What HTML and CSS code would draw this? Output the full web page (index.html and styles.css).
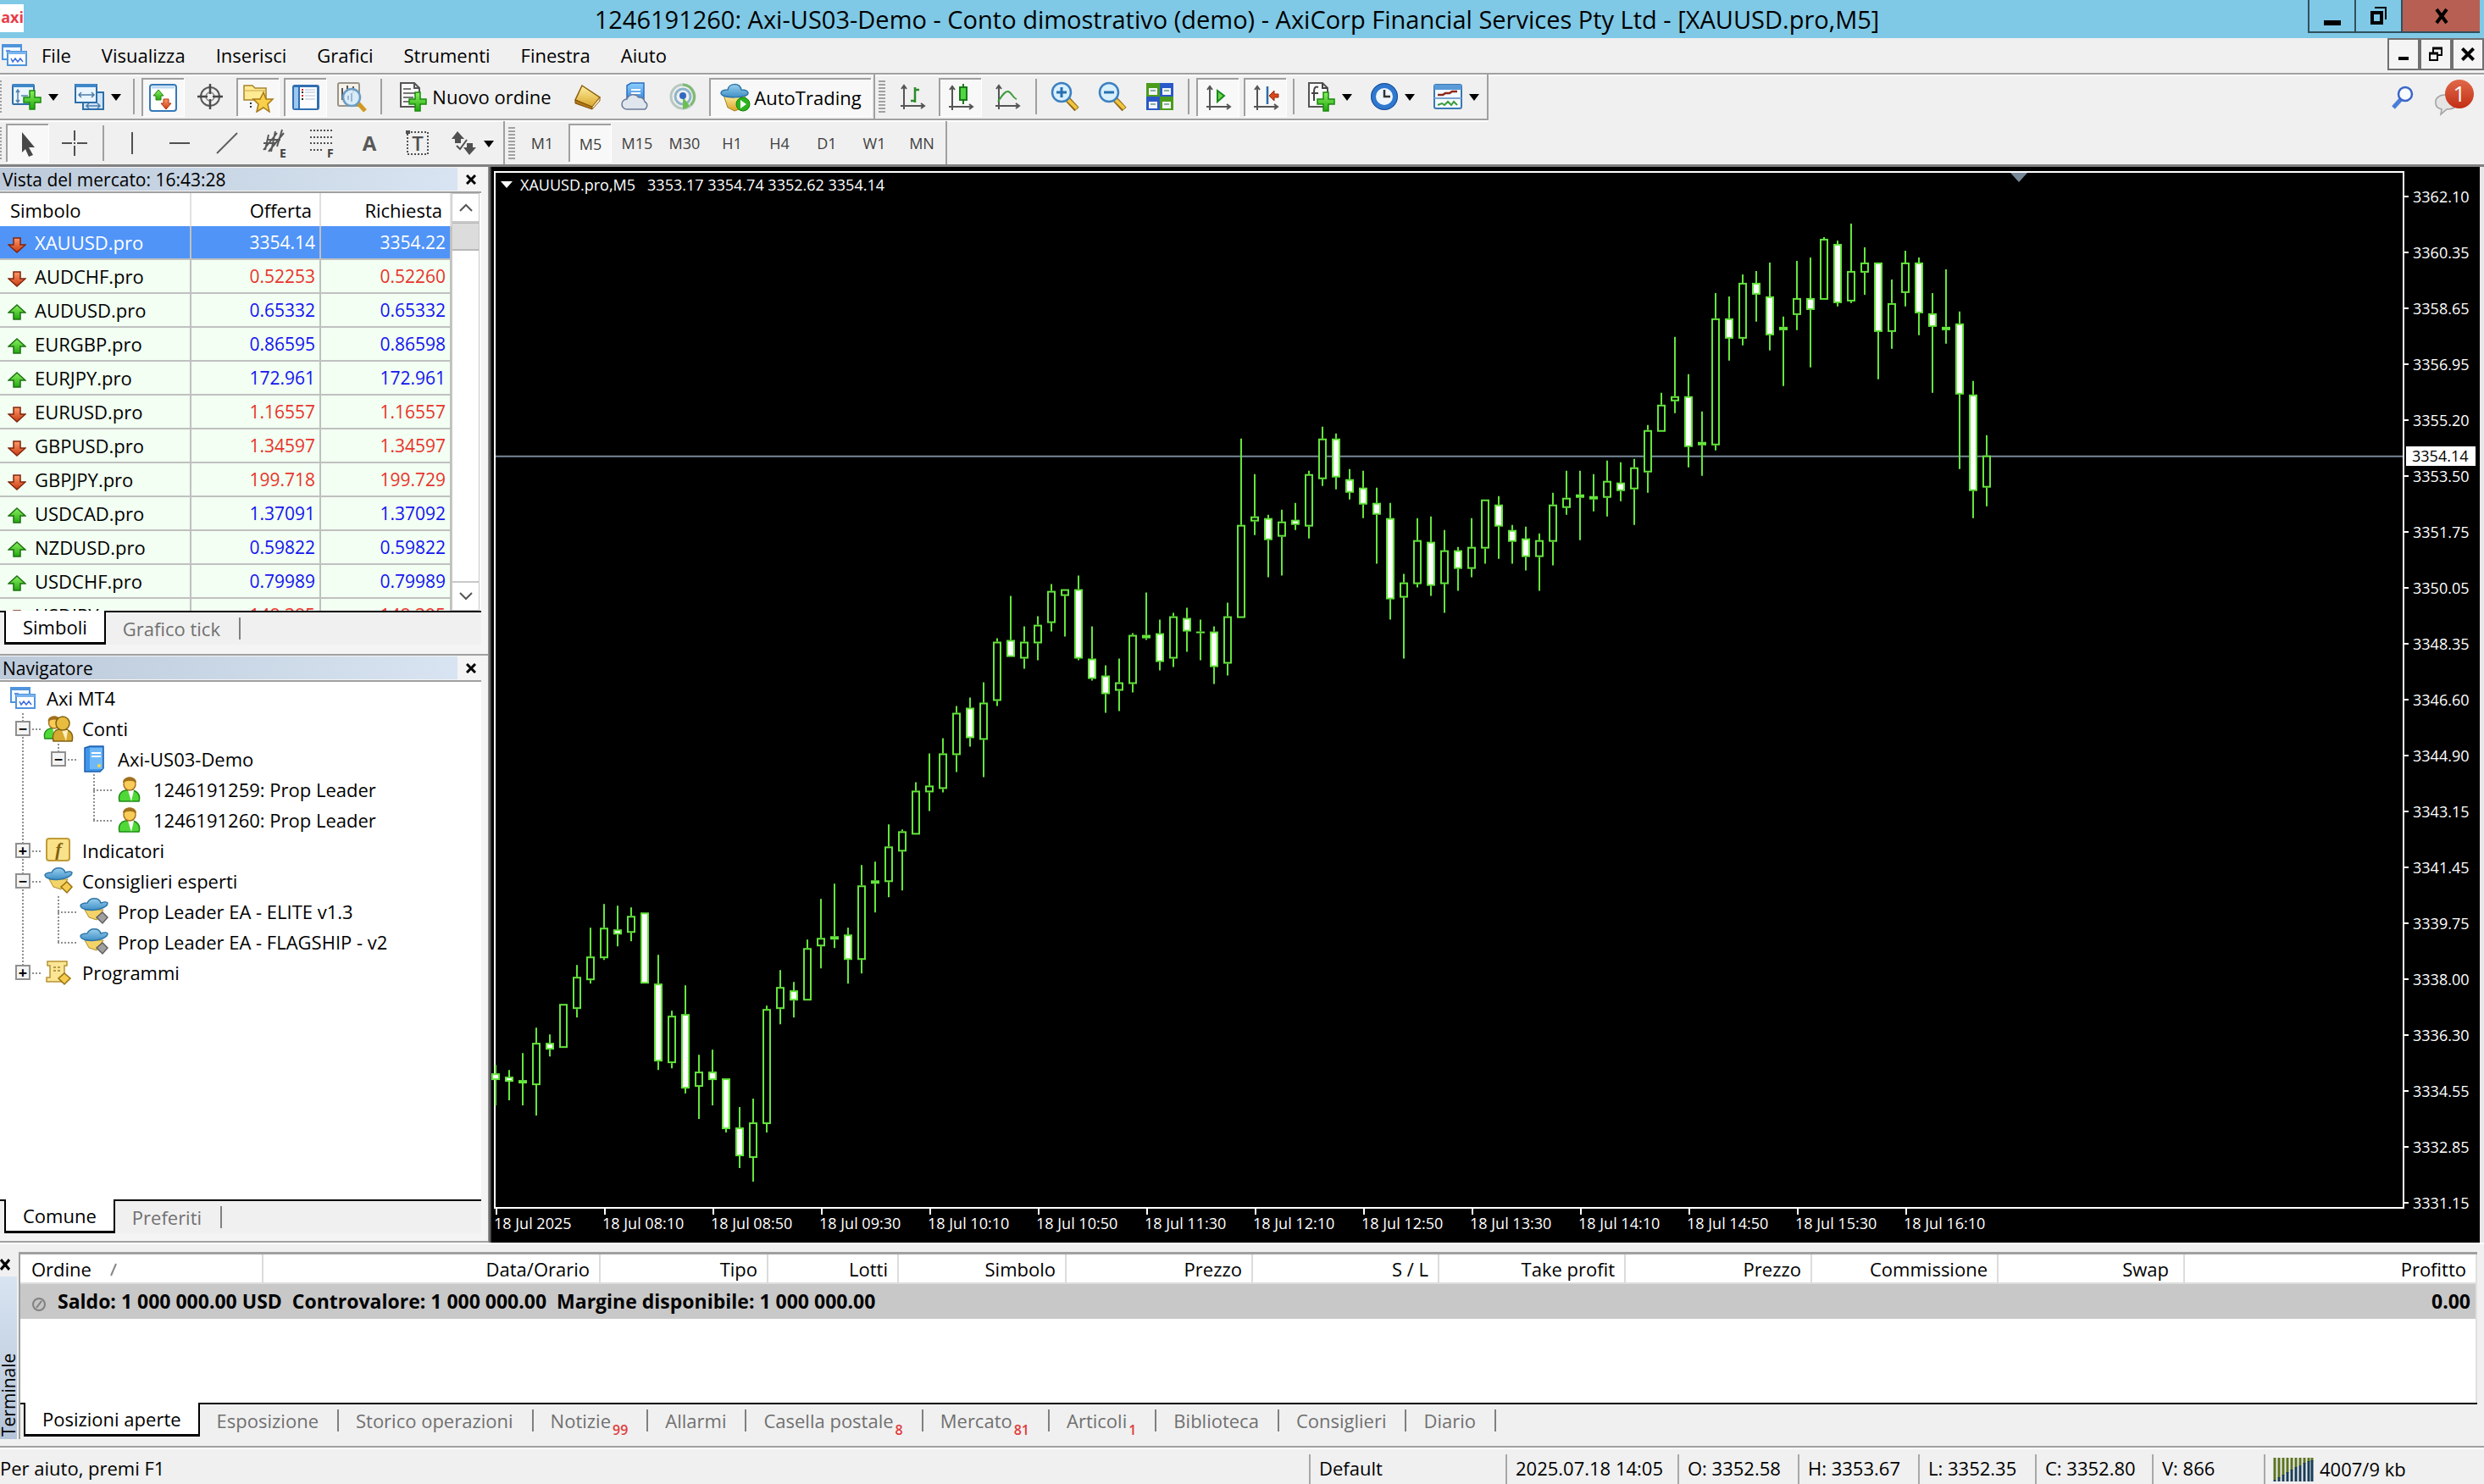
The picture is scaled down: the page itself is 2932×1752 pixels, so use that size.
FILE: index.html
```html
<!DOCTYPE html>
<html lang="it">
<head>
<meta charset="utf-8">
<title>1246191260: Axi-US03-Demo - [XAUUSD.pro,M5]</title>
<link rel="stylesheet" href="styles.css">
</head>
<body>
<svg class="sprite" aria-hidden="true">
  <defs>
    <linearGradient id="gGreen" x1="0" y1="0" x2="0" y2="1"><stop offset="0" stop-color="#8cf060"/><stop offset="1" stop-color="#22a80e"/></linearGradient>
    <linearGradient id="gBlue" x1="0" y1="0" x2="0" y2="1"><stop offset="0" stop-color="#8fd0ff"/><stop offset="1" stop-color="#2d7fd6"/></linearGradient>
    <linearGradient id="gHat" x1="0" y1="0" x2="0" y2="1"><stop offset="0" stop-color="#9ad0ee"/><stop offset="1" stop-color="#3f8fc6"/></linearGradient>
    <linearGradient id="gGold" x1="0" y1="0" x2="0" y2="1"><stop offset="0" stop-color="#fff0a0"/><stop offset="1" stop-color="#d8a428"/></linearGradient>
    <linearGradient id="gRed" x1="0" y1="0" x2="0" y2="1"><stop offset="0" stop-color="#ff9a6a"/><stop offset="1" stop-color="#c83a10"/></linearGradient>
    <linearGradient id="gBadge" x1="0" y1="0" x2="0" y2="1"><stop offset="0" stop-color="#e0694a"/><stop offset="1" stop-color="#c22e16"/></linearGradient>
  </defs>
  <symbol id="plus" viewBox="0 0 22 24"><path d="M8 1h6v8h7v6h-7v8H8v-8H1V9h7z" fill="url(#gGreen)" stroke="#178a0c" stroke-width="1.5"/></symbol>
  <symbol id="newchart" viewBox="0 0 36 34"><rect x="1" y="3" width="25" height="23" rx="1" fill="#eaf5ff" stroke="#2e6ea8" stroke-width="2"/><path d="M1 2h25v4H1z" fill="#3f86c8"/><path d="M7 10v13M5 12l2-3 2 3M5 21l2 3 2-3M11 16h8" stroke="#5583ad" stroke-width="1.5" fill="none"/><use href="#plus" x="13" y="9" width="22" height="24"/></symbol>
  <symbol id="profiles" viewBox="0 0 36 34"><rect x="10" y="12" width="24" height="20" fill="#cfe4f8" stroke="#2e6ea8" stroke-width="2"/><rect x="1" y="3" width="25" height="21" fill="#eaf5ff" stroke="#2e6ea8" stroke-width="2"/><path d="M1 2h25v4H1z" fill="#3f86c8"/><path d="M6 15h16M8 12l-3 3 3 3M20 12l3 3-3 3M14 28h15M17 25l-3 3 3 3M27 25l3 3-3 3" stroke="#4d7eaa" stroke-width="1.5" fill="none"/></symbol>
  <symbol id="market" viewBox="0 0 36 34"><rect x="2" y="2" width="31" height="31" rx="3" fill="#fff" stroke="#3579b8" stroke-width="2"/><path d="M4 5h27" stroke="#bcd9f2" stroke-width="3"/><path d="M6 15l6-7 6 7h-3v5H9v-5z" fill="url(#gGreen)" stroke="#27840f"/><path d="M15 24l6 7 6-7h-3v-5h-6v5z" fill="url(#gRed)" stroke="#b0300c"/></symbol>
  <symbol id="cross" viewBox="0 0 34 34"><circle cx="17" cy="17" r="11" fill="none" stroke="#585858" stroke-width="2"/><circle cx="17" cy="17" r="5" fill="none" stroke="#888" stroke-width="1.5"/><path d="M17 2v12M17 20v12M2 17h12M20 17h12" stroke="#484848" stroke-width="2.5"/></symbol>
  <symbol id="favor" viewBox="0 0 38 36"><path d="M2 4h10l3 3h13v14H2z" fill="#ffeb94" stroke="#a8842a" stroke-width="1.5"/><path d="M2 10h26" stroke="#c9a548"/><path d="M10 24v8" stroke="#333" stroke-width="2" stroke-dasharray="2 2"/><path d="M25 12l3 8h8l-6 6 2 9-7-5-8 5 2-9-6-6h8z" fill="#f8cf48" stroke="#a87a18" stroke-width="1.5"/></symbol>
  <symbol id="navpane" viewBox="0 0 36 34"><rect x="2" y="2" width="32" height="30" rx="3" fill="#2f6fb2"/><rect x="4" y="5" width="5" height="25" fill="#9cc8f0"/><rect x="11" y="5" width="20" height="25" fill="#fdfdff"/><path d="M13 8h2M13 15h2" stroke="#e02020" stroke-width="2"/><path d="M13 11h2M13 19h2" stroke="#222" stroke-width="2"/><path d="M17 8h12M17 11h12M17 15h12M17 19h12" stroke="#b0c0d4"/></symbol>
  <symbol id="tester" viewBox="0 0 38 36"><rect x="2" y="2" width="25" height="27" rx="2" fill="#f6f2ea" stroke="#9a9488" stroke-width="2"/><path d="M7 8v14M13 5v8M20 6v8" stroke="#555" stroke-width="2"/><path d="M25 25l9 10" stroke="#d09a20" stroke-width="5"/><circle cx="18" cy="19" r="10" fill="#d5ebfb" fill-opacity=".9" stroke="#6d9cc4" stroke-width="2.5"/><path d="M18 14v10M14 17v5" stroke="#9cb8d0" stroke-width="2"/></symbol>
  <symbol id="neworder" viewBox="0 0 34 38"><path d="M2 3h16l6 6v22H2z" fill="#fafafa" stroke="#555" stroke-width="2"/><path d="M18 3v6h6" fill="none" stroke="#555" stroke-width="2"/><path d="M5 10h9M5 15h14M5 20h12M5 25h8" stroke="#777" stroke-width="2"/><use href="#plus" x="11" y="13" width="22" height="24"/></symbol>
  <symbol id="book" viewBox="0 0 34 32"><path d="M10 3L31 17 22 29 2 20z" fill="url(#gGold)" stroke="#8c5d0c" stroke-width="1.5"/><path d="M2 20l20 8v3L2 24z" fill="#b07818" stroke="#7a4d08"/><path d="M22 28l9-11v4l-9 10z" fill="#fff3cf" stroke="#8c5d0c"/></symbol>
  <symbol id="cloud" viewBox="0 0 34 34"><path d="M7 4l5-3h15v20l-4 2H7z" fill="url(#gBlue)" stroke="#2a6fc0" stroke-width="1.5"/><path d="M12 9h11M12 13h11" stroke="#fff" stroke-width="2"/><path d="M7 32a6 6 0 0 1 0-12 8 8 0 0 1 14-2 6 6 0 0 1 7 5 5 5 0 0 1 0 9z" fill="#dfe6ee" stroke="#6a7c98" stroke-width="1.5"/></symbol>
  <symbol id="signal" viewBox="0 0 34 34"><circle cx="17" cy="17" r="14" fill="none" stroke="#b8c8c0" stroke-width="3"/><path d="M17 3a14 14 0 0 1 9 24" fill="none" stroke="#7cba70" stroke-width="3"/><circle cx="17" cy="17" r="9" fill="none" stroke="#8fb4c8" stroke-width="3"/><path d="M17 17v15a14 14 0 0 0 8-4z" fill="#6cc050"/><circle cx="17" cy="16" r="4" fill="#3468c0"/></symbol>
  <symbol id="auto" viewBox="0 0 36 34"><path d="M4 14h26l-5 16-8 3-8-4z" fill="url(#gGold)" stroke="#a88020"/><path d="M1 12c0-4 5-4 8-4 1-8 14-9 16 0 4 0 8 1 8 4 0 6-31 7-32 0z" fill="url(#gHat)" stroke="#2e75a8" stroke-width="1.5"/><circle cx="27" cy="25" r="8" fill="#2cb41c" stroke="#128008"/><path d="M24 20l7 5-7 5z" fill="#fff"/></symbol>
  <symbol id="axes" viewBox="0 0 32 34"><path d="M6 4v28M2 28h28M3 8l3-4 3 4M26 25l4 3-4 3" fill="none" stroke="#555" stroke-width="2"/></symbol>
  <symbol id="bars" viewBox="0 0 32 34"><use href="#axes"/><path d="M19 6v18M19 9h5M14 22h5" stroke="#2a8c2a" stroke-width="2.5" fill="none"/></symbol>
  <symbol id="candles" viewBox="0 0 32 34"><use href="#axes"/><path d="M19 1v24" stroke="#1a7a1a" stroke-width="2"/><rect x="15" y="5" width="8" height="15" fill="#50d840" stroke="#1a7a1a" stroke-width="2"/></symbol>
  <symbol id="line" viewBox="0 0 32 34"><use href="#axes"/><path d="M5 23C9 17 13 10 17 11s6 8 10 9" stroke="#3a9c3a" stroke-width="2" fill="none"/></symbol>
  <symbol id="zoomin" viewBox="0 0 36 36"><path d="M21 21l11 12" stroke="#8c6410" stroke-width="7"/><path d="M21 21l11 11" stroke="#f0c440" stroke-width="4"/><circle cx="14" cy="13" r="11" fill="#d8effc" stroke="#3c80c0" stroke-width="2.5"/><path d="M8 13h12M14 7v12" stroke="#2870b0" stroke-width="3"/></symbol>
  <symbol id="zoomout" viewBox="0 0 36 36"><path d="M21 21l11 12" stroke="#8c6410" stroke-width="7"/><path d="M21 21l11 11" stroke="#f0c440" stroke-width="4"/><circle cx="14" cy="13" r="11" fill="#d8effc" stroke="#3c80c0" stroke-width="2.5"/><path d="M8 13h12" stroke="#2870b0" stroke-width="3"/></symbol>
  <symbol id="tile" viewBox="0 0 34 34"><path d="M1 1h16v16H1zM17 17h16v16H17z" fill="#4c9c1c"/><path d="M17 1h16v16H17zM1 17h16v16H1z" fill="#2a58c8"/><path d="M4 7h10v8H4zM20 7h10v8H20zM4 23h10v8H4zM20 23h10v8H20z" fill="#f2f6fa"/><path d="M6 10h6M22 10h6M6 26h6M22 26h6" stroke="#8ab0a0" stroke-width="2"/></symbol>
  <symbol id="scroll" viewBox="0 0 32 34"><use href="#axes"/><path d="M15 9l8 6-8 7z" fill="#6ad850" stroke="#1a8a1a" stroke-width="2"/></symbol>
  <symbol id="shift" viewBox="0 0 32 34"><use href="#axes"/><path d="M18 4v21" stroke="#2a6ca8" stroke-width="2.5"/><path d="M20 15l6-6v4h5v4h-5v4z" fill="#d84818" stroke="#98280c"/></symbol>
  <symbol id="indic" viewBox="0 0 34 38"><path d="M2 3h16l6 6v22H2z" fill="#fafafa" stroke="#555" stroke-width="2"/><path d="M18 3v6h6M13 8c-4-2-5 2-5 5v11M5 15h8" fill="none" stroke="#444" stroke-width="2"/><use href="#plus" x="11" y="13" width="22" height="24"/></symbol>
  <symbol id="clock" viewBox="0 0 34 34"><circle cx="17" cy="17" r="13" fill="#eef6fc" stroke="#2f78d0" stroke-width="6"/><circle cx="17" cy="17" r="15.5" fill="none" stroke="#1a4c90"/><path d="M17 9v8h7" fill="none" stroke="#333" stroke-width="2.5"/></symbol>
  <symbol id="template" viewBox="0 0 36 34"><rect x="2" y="3" width="32" height="28" rx="2" fill="#f4faff" stroke="#3a78b4" stroke-width="2"/><path d="M2 3h32v6H2z" fill="#5a9ad8"/><path d="M2 19h32" stroke="#7aa8d0" stroke-width="2"/><path d="M6 15h6l3-2h5l3-2h6" stroke="#902818" stroke-width="2.5" fill="none"/><path d="M6 27l5-2 3 2 4-4 4 4 3-4 4 4" stroke="#3a9c3a" stroke-width="2" fill="none"/></symbol>
  <symbol id="cursor" viewBox="0 0 34 34"><path d="M10 3l15 18h-7l5 9-5 2-4-9-4 4z" fill="#484848"/></symbol>
  <symbol id="tcross" viewBox="0 0 34 34"><path d="M17 2v12M17 20v12M2 17h12M20 17h12M16 17h2" stroke="#505050" stroke-width="2"/></symbol>
  <symbol id="vline" viewBox="0 0 34 34"><path d="M17 4v26" stroke="#505050" stroke-width="2"/></symbol>
  <symbol id="hline" viewBox="0 0 34 34"><path d="M5 17h24" stroke="#505050" stroke-width="2"/></symbol>
  <symbol id="trend" viewBox="0 0 34 34"><path d="M5 29L29 5" stroke="#606060" stroke-width="2"/></symbol>
  <symbol id="channel" viewBox="0 0 34 36"><path d="M4 26L20 6M10 28L28 6M4 18h14M8 14h16M10 8l-4 18M18 4l-5 24M26 2l-6 20" stroke="#585858" stroke-width="2"/></symbol>
  <symbol id="fibo" viewBox="0 0 34 36"><path d="M3 3h26M3 11h26M3 18h26M3 26h16" stroke="#505050" stroke-width="2" stroke-dasharray="2 2"/></symbol>
  <symbol id="label" viewBox="0 0 34 34"><rect x="6" y="4" width="24" height="26" fill="none" stroke="#505050" stroke-width="2" stroke-dasharray="2 2"/><path d="M4 2h5v4H4z" fill="#505050"/></symbol>
  <symbol id="arrows" viewBox="0 0 34 34"><path d="M10 3l8 9h-4v5H7v-5H3zM24 31l8-9h-4v-5h-7v5h-4z" fill="#505050"/><path d="M9 20l4 4 8-11" fill="none" stroke="#505050" stroke-width="2"/></symbol>
  <symbol id="caret" viewBox="0 0 12 8"><path d="M0 0h12L6 8z" fill="#000"/></symbol>
  <symbol id="chartwin" viewBox="0 0 30 28"><rect x="1" y="2" width="22" height="17" fill="#f3f9ff" stroke="#4f94dc" stroke-width="2"/><path d="M1 2h22v3H1z" fill="#4f94dc"/><path d="M5 9h3M9 8v3" stroke="#3a6ce0" stroke-width="1.5"/><rect x="7" y="10" width="22" height="16" fill="#fff" stroke="#4f94dc" stroke-width="2"/><path d="M7 10h22v3H7z" fill="#7ab4ee"/><path d="M11 18l2 4 3-4 3 4 3-4 3 4" stroke="#3a6ce0" stroke-width="1.5" fill="none"/></symbol>
  <symbol id="up" viewBox="0 0 22 20"><path d="M11 1l10 9h-6v8H7v-8H1z" fill="url(#gGreen)" stroke="#1c7010" stroke-width="1.5"/></symbol>
  <symbol id="down" viewBox="0 0 22 20"><path d="M11 19l10-9h-6V2H7v8H1z" fill="url(#gRed)" stroke="#80240c" stroke-width="1.5"/></symbol>
  <symbol id="user" viewBox="0 0 28 32"><path d="M2 30c-2-8 2-12 7-13h9c6 2 9 6 7 13z" fill="#50d838" stroke="#1e8c14" stroke-width="1.5"/><path d="M12 17l4 13 3-13z" fill="#fff"/><circle cx="14" cy="10" r="7" fill="#f8cc58" stroke="#a87020" stroke-width="1.5"/><path d="M6 8C6-1 22-1 22 8c-6-3-10-3-16 0z" fill="#a0701c"/></symbol>
  <symbol id="users" viewBox="0 0 36 34"><use href="#user" x="0" y="0" width="26" height="32"/><path d="M12 32c-2-9 2-13 6-14h9c6 2 9 6 7 14z" fill="#d8aa30" stroke="#806010" stroke-width="1.5"/><path d="M22 19l5 13 2-13z" fill="#fff0c0"/><circle cx="23" cy="11" r="8" fill="#e8bc40" stroke="#806010" stroke-width="1.5"/></symbol>
  <symbol id="server" viewBox="0 0 26 32"><path d="M2 3l6-2h16v26l-4 4H2z" fill="#3f96e8" stroke="#1c5cac" stroke-width="1.5"/><path d="M8 3h15v25H8z" fill="#6fb8f8"/><path d="M10 9h11M10 13h11" stroke="#fff" stroke-width="2"/><circle cx="19" cy="24" r="2" fill="#f8d840"/></symbol>
  <symbol id="func" viewBox="0 0 32 32"><rect x="2" y="2" width="27" height="26" rx="3" fill="#fae28a" stroke="#c09c38" stroke-width="2"/></symbol>
  <symbol id="hat" viewBox="0 0 34 32"><path d="M6 14l5 9 9 3 8-12z" fill="#f4d468" stroke="#b08c28"/><path d="M1 9c1-3 6-3 8-3 3-7 14-7 16 0 3-1 7-2 8 0 0 9-31 12-32 3z" fill="url(#gHat)" stroke="#2e75a8" stroke-width="1.5"/></symbol>
  <symbol id="experts" viewBox="0 0 34 32"><use href="#hat"/><path d="M27 17l6 6-6 7-7-7z" fill="#f4cc50" stroke="#987010" stroke-width="1.5"/></symbol>
  <symbol id="expert" viewBox="0 0 34 32"><use href="#hat"/><path d="M27 17l6 6-6 7-7-7z" fill="#a0a0a0" stroke="#606060" stroke-width="1.5"/></symbol>
  <symbol id="scripts" viewBox="0 0 32 32"><path d="M3 3h23v5h-3v14h-3v5H2v-5h4V8H3z" fill="#fae694" stroke="#b89430" stroke-width="1.5"/><path d="M10 10h3M15 10h3M10 14h3M15 14h3" stroke="#a08030" stroke-width="1.5"/><path d="M23 17l7 6-7 7-7-7z" fill="#f4cc50" stroke="#987010" stroke-width="1.5"/></symbol>
  <symbol id="xmark" viewBox="0 0 12 12"><path d="M1 1l10 10M11 1L1 11" stroke="#000" stroke-width="3"/></symbol>
</svg>

<header class="titlebar">
  <span class="brand">axi</span>
  <h1 class="title">1246191260: Axi-US03-Demo - Conto dimostrativo (demo) - AxiCorp Financial Services Pty Ltd - [XAUUSD.pro,M5]</h1>
  <div class="winbtns">
    <button class="winbtn" aria-label="Riduci"><svg width="20" height="32" viewBox="0 0 20 32"><path d="M0 21h20v6H0z"/></svg></button>
    <button class="winbtn" aria-label="Ripristina"><svg width="20" height="24" viewBox="0 0 20 24"><path d="M5 2h13v14" fill="none" stroke="#000" stroke-width="2"/><path d="M2 8h11v12H2z" fill="none" stroke="#000" stroke-width="4"/></svg></button>
    <button class="winbtn winbtn-close" aria-label="Chiudi"><svg width="18" height="16" viewBox="0 0 18 16"><path d="M3 0l12 16M15 0L3 16" stroke="#000" stroke-width="4"/></svg></button>
  </div>
</header>

<nav class="menubar">
  <svg class="ic" width="30" height="28"><use href="#chartwin"/></svg>
  <button class="menu">File</button><button class="menu">Visualizza</button><button class="menu">Inserisci</button><button class="menu">Grafici</button><button class="menu">Strumenti</button><button class="menu">Finestra</button><button class="menu">Aiuto</button>
  <div class="mdibtns">
    <button class="mdibtn" aria-label="Riduci grafico"><svg width="14" height="16" viewBox="0 0 14 16"><path d="M1 11h12v4H1z"/></svg></button>
    <button class="mdibtn" aria-label="Ripristina grafico"><svg width="18" height="18" viewBox="0 0 18 18"><path d="M6 7V2h10v8h-4M2 8h9v8H2z" fill="none" stroke="#000" stroke-width="2"/><path d="M5 2h12M1 8h11" stroke="#000" stroke-width="3"/></svg></button>
    <button class="mdibtn" aria-label="Chiudi grafico"><svg width="16" height="16"><use href="#xmark"/></svg></button>
  </div>
</nav>

<div class="toolrow">
  <div class="toolbar">
    <i class="grip grip-edge"></i>
    <button class="tool tool-dd" aria-label="Nuovo grafico"><svg width="36" height="34"><use href="#newchart"/></svg><svg class="caret"><use href="#caret"/></svg></button>
    <button class="tool tool-dd" aria-label="Profili"><svg width="36" height="34"><use href="#profiles"/></svg><svg class="caret"><use href="#caret"/></svg></button>
    <i class="sep"></i>
    <button class="tool on" aria-label="Vista del mercato"><svg width="36" height="34"><use href="#market"/></svg></button>
    <button class="tool" aria-label="Finestra dati"><svg width="34" height="34"><use href="#cross"/></svg></button>
    <button class="tool on" aria-label="Navigatore"><svg width="38" height="36"><use href="#favor"/></svg></button>
    <button class="tool on" aria-label="Terminale"><svg width="36" height="34"><use href="#navpane"/></svg></button>
    <button class="tool" aria-label="Tester"><svg width="38" height="36"><use href="#tester"/></svg></button>
    <i class="sep"></i>
    <button class="tool tool-order"><svg width="34" height="38"><use href="#neworder"/></svg>Nuovo ordine</button>
    <button class="tool" aria-label="MetaEditor"><svg width="34" height="32"><use href="#book"/></svg></button>
    <button class="tool" aria-label="Hosting virtuale"><svg width="34" height="34"><use href="#cloud"/></svg></button>
    <button class="tool" aria-label="Segnali"><svg width="34" height="34"><use href="#signal"/></svg></button>
    <button class="tool tool-auto on"><svg width="36" height="34"><use href="#auto"/></svg>AutoTrading</button>
  </div>
  <div class="toolbar">
    <i class="grip"></i>
    <button class="tool" aria-label="Barre"><svg width="32" height="34"><use href="#bars"/></svg></button>
    <button class="tool on" aria-label="Candele"><svg width="32" height="34"><use href="#candles"/></svg></button>
    <button class="tool" aria-label="Linea"><svg width="32" height="34"><use href="#line"/></svg></button>
    <i class="sep"></i>
    <button class="tool" aria-label="Ingrandisci"><svg width="36" height="36"><use href="#zoomin"/></svg></button>
    <button class="tool" aria-label="Rimpicciolisci"><svg width="36" height="36"><use href="#zoomout"/></svg></button>
    <button class="tool" aria-label="Affianca finestre"><svg width="34" height="34"><use href="#tile"/></svg></button>
    <i class="sep"></i>
    <button class="tool on" aria-label="Scorrimento automatico"><svg width="32" height="34"><use href="#scroll"/></svg></button>
    <button class="tool on" aria-label="Sposta grafico"><svg width="32" height="34"><use href="#shift"/></svg></button>
    <i class="sep"></i>
    <button class="tool tool-dd" aria-label="Indicatori"><svg width="34" height="38"><use href="#indic"/></svg><svg class="caret"><use href="#caret"/></svg></button>
    <button class="tool tool-dd" aria-label="Periodi"><svg width="34" height="34"><use href="#clock"/></svg><svg class="caret"><use href="#caret"/></svg></button>
    <button class="tool tool-dd" aria-label="Modelli"><svg width="36" height="34"><use href="#template"/></svg><svg class="caret"><use href="#caret"/></svg></button>
  </div>
  <div class="tray">
    <button class="traybtn" aria-label="Cerca"><svg width="28" height="28" viewBox="0 0 28 28"><path d="M13 15L3 26" stroke="#4a7cd8" stroke-width="5"/><circle cx="17" cy="10" r="8" fill="#f8fbff" stroke="#3a66c8" stroke-width="2.5"/></svg></button>
    <button class="traybtn" aria-label="Messaggi: 1"><svg width="46" height="42" viewBox="0 0 46 42"><path d="M12 18c-8 0-12 5-11 10 0 4 3 6 7 7l-1 6 7-6c8 0 12-3 12-8s-5-9-14-9z" fill="#e4e4e4" stroke="#a0a0a0" stroke-width="1.5"/><circle cx="29" cy="17" r="17" fill="url(#gBadge)"/><text x="29" y="26" text-anchor="middle" class="badge-n">1</text></svg></button>
  </div>
</div>

<div class="toolrow toolrow-last">
  <div class="toolbar toolbar-open">
    <i class="grip grip-edge"></i>
    <button class="tool on" aria-label="Cursore"><svg width="34" height="34"><use href="#cursor"/></svg></button>
    <button class="tool" aria-label="Mirino"><svg width="34" height="34"><use href="#tcross"/></svg></button>
    <i class="sep"></i>
    <button class="tool" aria-label="Linea verticale"><svg width="34" height="34"><use href="#vline"/></svg></button>
    <button class="tool" aria-label="Linea orizzontale"><svg width="34" height="34"><use href="#hline"/></svg></button>
    <button class="tool" aria-label="Linea di tendenza"><svg width="34" height="34"><use href="#trend"/></svg></button>
    <button class="tool" aria-label="Canale equidistante"><svg width="34" height="36"><use href="#channel"/><text x="23" y="35" class="glyph-s">E</text></svg></button>
    <button class="tool" aria-label="Fibonacci"><svg width="34" height="36"><use href="#fibo"/><text x="23" y="35" class="glyph-s">F</text></svg></button>
    <button class="tool tool-a" aria-label="Testo">A</button>
    <button class="tool" aria-label="Etichetta"><svg width="34" height="34"><use href="#label"/><text x="18" y="26" text-anchor="middle" class="glyph">T</text></svg></button>
    <button class="tool tool-dd" aria-label="Frecce"><svg width="34" height="34"><use href="#arrows"/></svg><svg class="caret"><use href="#caret"/></svg></button>
  </div>
  <div class="toolbar toolbar-open">
    <i class="grip"></i>
    <button class="tool tf">M1</button><button class="tool tf on">M5</button><button class="tool tf">M15</button><button class="tool tf">M30</button><button class="tool tf">H1</button><button class="tool tf">H4</button><button class="tool tf">D1</button><button class="tool tf">W1</button><button class="tool tf">MN</button>
  </div>
</div>

<main class="work">
  <aside class="side">
    <section class="panel">
      <header class="phead"><h2 class="ptitle">Vista del mercato: 16:43:28</h2><button class="pclose" aria-label="Chiudi"><svg width="12" height="12"><use href="#xmark"/></svg></button></header>
      <div class="quotes">
        <table class="qtable">
          <colgroup><col class="q-sym"><col class="q-num"><col></colgroup>
          <thead><tr><th>Simbolo</th><th>Offerta</th><th>Richiesta</th></tr></thead>
          <tbody>
            <tr class="sel"><td><svg class="arr"><use href="#down"/></svg>XAUUSD.pro</td><td>3354.14</td><td>3354.22</td></tr>
            <tr class="dn"><td><svg class="arr"><use href="#down"/></svg>AUDCHF.pro</td><td>0.52253</td><td>0.52260</td></tr>
            <tr><td><svg class="arr"><use href="#up"/></svg>AUDUSD.pro</td><td>0.65332</td><td>0.65332</td></tr>
            <tr><td><svg class="arr"><use href="#up"/></svg>EURGBP.pro</td><td>0.86595</td><td>0.86598</td></tr>
            <tr><td><svg class="arr"><use href="#up"/></svg>EURJPY.pro</td><td>172.961</td><td>172.961</td></tr>
            <tr class="dn"><td><svg class="arr"><use href="#down"/></svg>EURUSD.pro</td><td>1.16557</td><td>1.16557</td></tr>
            <tr class="dn"><td><svg class="arr"><use href="#down"/></svg>GBPUSD.pro</td><td>1.34597</td><td>1.34597</td></tr>
            <tr class="dn"><td><svg class="arr"><use href="#down"/></svg>GBPJPY.pro</td><td>199.718</td><td>199.729</td></tr>
            <tr><td><svg class="arr"><use href="#up"/></svg>USDCAD.pro</td><td>1.37091</td><td>1.37092</td></tr>
            <tr><td><svg class="arr"><use href="#up"/></svg>NZDUSD.pro</td><td>0.59822</td><td>0.59822</td></tr>
            <tr><td><svg class="arr"><use href="#up"/></svg>USDCHF.pro</td><td>0.79989</td><td>0.79989</td></tr>
            <tr class="dn"><td><svg class="arr"><use href="#down"/></svg>USDJPY.pro</td><td>148.385</td><td>148.395</td></tr>
          </tbody>
        </table>
        <div class="sbar">
          <button class="sbtn" aria-label="Su"><svg width="16" height="10" viewBox="0 0 16 10"><path d="M1 9l7-7 7 7" fill="none" stroke="#555" stroke-width="2"/></svg></button>
          <i class="thumb"></i>
          <button class="sbtn sbtn-end" aria-label="Giù"><svg width="16" height="10" viewBox="0 0 16 10"><path d="M1 1l7 7 7-7" fill="none" stroke="#555" stroke-width="2"/></svg></button>
        </div>
      </div>
      <div class="tabs"><button class="tab cur">Simboli</button><button class="tab">Grafico tick</button></div>
    </section>
    <section class="panel panel-grow">
      <header class="phead"><h2 class="ptitle">Navigatore</h2><button class="pclose" aria-label="Chiudi"><svg width="12" height="12"><use href="#xmark"/></svg></button></header>
      <ul class="tree">
        <li><i class="cell"><svg width="30" height="28"><use href="#chartwin"/></svg></i>Axi MT4</li>
        <li><i class="cell v h"><button class="tog" aria-label="Comprimi">−</button></i><i class="cell"><svg width="36" height="34"><use href="#users"/></svg></i>Conti</li>
        <li><i class="cell v"></i><i class="cell end h"><button class="tog" aria-label="Comprimi">−</button></i><i class="cell"><svg width="26" height="32"><use href="#server"/></svg></i>Axi-US03-Demo</li>
        <li><i class="cell v"></i><i class="cell"></i><i class="cell v h"></i><i class="cell"><svg width="28" height="32"><use href="#user"/></svg></i>1246191259: Prop Leader</li>
        <li><i class="cell v"></i><i class="cell"></i><i class="cell end h"></i><i class="cell"><svg width="28" height="32"><use href="#user"/></svg></i>1246191260: Prop Leader</li>
        <li><i class="cell v h"><button class="tog" aria-label="Espandi">+</button></i><i class="cell"><svg width="32" height="32"><use href="#func"/><text x="16" y="22" text-anchor="middle" class="glyph-f">f</text></svg></i>Indicatori</li>
        <li><i class="cell v h"><button class="tog" aria-label="Comprimi">−</button></i><i class="cell"><svg width="34" height="32"><use href="#experts"/></svg></i>Consiglieri esperti</li>
        <li><i class="cell v"></i><i class="cell v h"></i><i class="cell"><svg width="34" height="32"><use href="#expert"/></svg></i>Prop Leader EA - ELITE v1.3</li>
        <li><i class="cell v"></i><i class="cell end h"></i><i class="cell"><svg width="34" height="32"><use href="#expert"/></svg></i>Prop Leader EA - FLAGSHIP - v2</li>
        <li><i class="cell end h"><button class="tog" aria-label="Espandi">+</button></i><i class="cell"><svg width="32" height="32"><use href="#scripts"/></svg></i>Programmi</li>
      </ul>
      <div class="tabs"><button class="tab cur">Comune</button><button class="tab">Preferiti</button></div>
    </section>
  </aside>

  <section class="chart">
    <div class="plot">
      <svg class="candles" id="candleChart" viewBox="585 203 2251 1222" preserveAspectRatio="none"></svg>
      <p class="ohlc"><svg width="14" height="8"><path d="M0 0h14L7 8z" fill="#fff"/></svg>XAUUSD.pro,M5&nbsp;&nbsp; 3353.17 3354.74 3352.62 3354.14</p>
    </div>
    <ol class="prices">
      <li>3362.10</li><li>3360.35</li><li>3358.65</li><li>3356.95</li><li>3355.20</li><li>3353.50</li><li>3351.75</li><li>3350.05</li><li>3348.35</li><li>3346.60</li><li>3344.90</li><li>3343.15</li><li>3341.45</li><li>3339.75</li><li>3338.00</li><li>3336.30</li><li>3334.55</li><li>3332.85</li><li>3331.15</li>
    </ol>
    <span class="bid">3354.14</span>
    <ol class="times">
      <li>18 Jul 2025</li><li>18 Jul 08:10</li><li>18 Jul 08:50</li><li>18 Jul 09:30</li><li>18 Jul 10:10</li><li>18 Jul 10:50</li><li>18 Jul 11:30</li><li>18 Jul 12:10</li><li>18 Jul 12:50</li><li>18 Jul 13:30</li><li>18 Jul 14:10</li><li>18 Jul 14:50</li><li>18 Jul 15:30</li><li>18 Jul 16:10</li>
    </ol>
  </section>
</main>

<section class="terminal">
  <div class="tside"><button class="tclose" aria-label="Chiudi terminale"><svg width="12" height="14" viewBox="0 0 12 12" preserveAspectRatio="none"><use href="#xmark"/></svg></button><h2 class="tname">Terminale</h2></div>
  <div class="tbody">
    <div class="orders">
      <table class="otable">
        <colgroup><col class="o1"><col class="o2"><col class="o3"><col class="o4"><col class="o5"><col class="o6"><col class="o6"><col class="o6"><col class="o6"><col class="o6"><col class="o6"><col></colgroup>
        <thead><tr><th>Ordine <svg class="sort" width="8" height="16" viewBox="0 0 8 16"><path d="M7 1L1 15" stroke="#888" stroke-width="2"/></svg></th><th>Data/Orario</th><th>Tipo</th><th>Lotti</th><th>Simbolo</th><th>Prezzo</th><th>S / L</th><th>Take profit</th><th>Prezzo</th><th>Commissione</th><th class="swap">Swap</th><th>Profitto</th></tr></thead>
        <tbody><tr><td colspan="11"><svg class="dot" width="18" height="18" viewBox="0 0 18 18"><circle cx="9" cy="9" r="7" fill="#c4c4c4" stroke="#808080" stroke-width="2"/><path d="M12 5l-6 8" stroke="#808080" stroke-width="2"/></svg>Saldo: 1 000 000.00 USD&nbsp; Controvalore: 1 000 000.00&nbsp; Margine disponibile: 1 000 000.00</td><td>0.00</td></tr></tbody>
      </table>
    </div>
    <div class="tabs ttabs"><button class="tab cur">Posizioni aperte</button><button class="tab">Esposizione</button><button class="tab">Storico operazioni</button><button class="tab">Notizie<sub>99</sub></button><button class="tab">Allarmi</button><button class="tab">Casella postale<sub>8</sub></button><button class="tab">Mercato<sub>81</sub></button><button class="tab">Articoli<sub>1</sub></button><button class="tab">Biblioteca</button><button class="tab">Consiglieri</button><button class="tab">Diario</button></div>
  </div>
</section>

<footer class="status">
  <span class="st st-help">Per aiuto, premi F1</span>
  <span class="st st-prof">Default</span>
  <span class="st st-time">2025.07.18 14:05</span>
  <span class="st st-o">O: 3352.58</span>
  <span class="st st-o">H: 3353.67</span>
  <span class="st st-l">L: 3352.35</span>
  <span class="st st-l">C: 3352.80</span>
  <span class="st st-v">V: 866</span>
  <span class="st st-net"><svg width="46" height="28" viewBox="0 0 46 28"><path d="M1 0v26M6 0v24M11 0v21M16 0v18M21 0v15M26 0v12M31 0v9M36 0v7M41 0v5M45 0v4" stroke="#5c7420" stroke-width="3"/><path d="M1 26v2M6 23v5M11 20v8M16 17v11M21 14v14M26 11v17M31 9v19M36 6v22M41 4v24M45 3v25" stroke="#183c58" stroke-width="3"/></svg>4007/9 kb</span>
</footer>
<script src="chart.js"></script>
</body>
</html>
```
FILE: styles.css
```css
* { box-sizing: border-box; }
body {
  margin: 0;
  min-height: 100vh;
  display: flex;
  flex-direction: column;
  background: #f0f0f0;
  color: #000;
  font: 22px/30px "Open Sans", "Noto Sans", sans-serif;
}
button { font: inherit; color: inherit; background: none; border: 0; margin: 0; padding: 0; }
h1, h2, p, ul, ol { margin: 0; padding: 0; font-weight: 400; list-style: none; }
svg { flex: none; overflow: visible; }
i { font-style: normal; }
.sprite { position: absolute; width: 0; height: 0; }
.glyph { font: 600 24px "Open Sans", sans-serif; fill: #505050; }
.glyph-s { font: 700 14px "Open Sans", sans-serif; fill: #404040; }
.glyph-f { font: italic 700 22px "Liberation Serif", serif; fill: #806010; }
.badge-n { font: 26px "Open Sans", sans-serif; fill: #fff; }

/* window frame */
.titlebar { display: flex; height: 45px; background: #7fc9e6; }
.brand { width: 28px; height: 33px; margin-top: 5px; background: #fff; color: #e83c48; font: 700 18px/30px "Open Sans", sans-serif; display: flex; justify-content: flex-end; overflow: hidden; }
.title { flex: 1; padding-left: 168px; text-align: center; font-size: 29px; line-height: 45px; white-space: nowrap; }
.winbtns { display: flex; height: 39px; margin-right: 5px; border: solid #30505c; border-width: 0 0 2px 2px; }
.winbtn { width: 55px; display: flex; align-items: center; justify-content: center; border-right: 2px solid #30505c; }
.winbtn-close { width: 91px; background: #b85f54; border-right: 0; }

.menubar { display: flex; align-items: center; height: 43px; padding: 0 0 2px 2px; border-bottom: 2px solid #a0a0a0; box-shadow: 0 2px #fff; }
.menu { padding: 0 18px; }
.menubar .ic { margin-right: -1px; }
.mdibtns { display: flex; align-self: flex-start; margin-left: auto; }
.mdibtn { width: 38px; height: 38px; display: flex; align-items: center; justify-content: center; border: 2px solid #707070; background: #f4f4f4; }

/* toolbars */
.toolrow { display: flex; height: 55px; }
.toolrow-last { height: 51px; }
.toolbar { display: flex; align-items: center; height: 54px; border: solid #a0a0a0; border-width: 0 2px 2px 0; box-shadow: 0 2px #fff; }
.toolbar-open { height: 51px; border-bottom: 0; box-shadow: none; }
.grip { width: 8px; height: 38px; margin: 0 4px; background: repeating-linear-gradient(#a0a0a0 0 2px, transparent 2px 4px); }
.grip-edge { width: 2px; margin: 0 2px 0 0; }
.tool { width: 50px; height: 45px; margin: 0 3px; display: flex; align-items: center; justify-content: center; white-space: nowrap; }
.tool.on { background: #f8f8f8; border: solid #a0a0a0; border-width: 2px 0 0 2px; box-shadow: 1px 1px #fff; }
.tool-dd { width: 68px; justify-content: flex-start; padding-left: 7px; gap: 7px; }
.caret { width: 12px; height: 8px; margin-top: 2px; }
.sep { width: 2px; height: 42px; margin: 0 5px; background: #a0a0a0; }
.tool-order { width: 204px; gap: 5px; }
.tool-auto { width: 191px; gap: 4px; }
.tool-a { font: 700 24px/45px "Open Sans", sans-serif; color: #585858; }
.tf { font-size: 18px; color: #404040; }
.tray { display: flex; align-items: center; gap: 24px; margin-left: auto; padding: 0 12px 2px 0; }
.traybtn { display: flex; }

/* panels on the left */
.work { flex: 1; display: flex; min-height: 0; border-top: 3px solid #808080; }
.side { width: 580px; display: flex; flex-direction: column; padding-right: 4px; background: linear-gradient(90deg, transparent 576px, #a0a0a0 576px, #303030 580px); }
.panel { display: flex; flex-direction: column; padding: 1px 8px 11px 0; border-bottom: 2px solid #a0a0a0; background: #f4f4f4; }
.panel-grow { flex: 1; padding-bottom: 9px; }
.phead { display: flex; align-items: center; justify-content: space-between; height: 30px; padding-right: 4px; border-bottom: 2px solid #a0a0a0; background: linear-gradient(90deg, #bccada, #d8e4f1) 0 0 / 540px 27px no-repeat; }
.ptitle { font-size: 21px; line-height: 28px; padding-left: 3px; }
.pclose { width: 14px; display: flex; }
.quotes { display: flex; height: 493px; overflow: hidden; background: #fff; }
.qtable { flex: none; width: 533px; table-layout: fixed; border-collapse: separate; border-spacing: 0; align-self: flex-start; }
.q-sym { width: 226px; }
.q-num { width: 153px; }
.qtable th { height: 39px; padding: 0 9px 0 12px; font-weight: 400; text-align: right; border-right: 2px solid #e0e0e0; }
.qtable th:first-child { text-align: left; }
.qtable td { height: 40px; padding: 0 5px; font-size: 21px; line-height: 30px; text-align: right; color: #1414f0; background: #f2fff2; border: solid #c0c0c0; border-width: 0 2px 2px 0; }
.qtable td:first-child { padding-left: 9px; text-align: left; font-size: 22px; color: #000; }
.qtable .dn td { color: #e8342c; }
.qtable .dn td:first-child { color: #000; }
.qtable .sel td, .qtable .sel td:first-child { color: #fff; background: #5094f8; }
.arr { width: 22px; height: 20px; margin-right: 10px; vertical-align: -4px; }
.sbar { flex: none; width: 33px; display: flex; flex-direction: column; border: 1px solid #c8c8c8; }
.sbtn { height: 34px; display: flex; align-items: center; justify-content: center; border-bottom: 2px solid #c8c8c8; }
.sbtn-end { margin-top: auto; border: solid #c8c8c8; border-width: 2px 0 0; }
.thumb { height: 33px; background: #dcdcdc; border: 1px solid #b8b8b8; border-width: 1px 0 2px; }

.tabs { display: flex; align-items: flex-start; border-top: 2px solid #000; color: #707070; padding-left: 5px; background: #f0f0f0; }
.tab { position: relative; height: 38px; padding: 0 24px 0 20px; white-space: nowrap; line-height: 32px; }
.tab:not(.cur)::after { content: ""; position: absolute; right: 0; top: 6px; width: 2px; height: 26px; background: #808080; }
.tab.cur { margin-top: -2px; height: 40px; padding: 0 20px; line-height: 36px; background: #fff; color: #000; border: solid #000; border-width: 0 2px 3px; }

.tree { flex: 1; padding: 1px 0 0 6px; background: #fff; }
.tree li { display: flex; align-items: center; height: 36px; white-space: nowrap; }
.cell { position: relative; width: 42px; height: 36px; display: flex; align-items: center; justify-content: center; flex: none; background-repeat: no-repeat; }
.cell:last-of-type { margin-right: 7px; }
.v { background-image: repeating-linear-gradient(#909090 0 2px, transparent 2px 4px); background-size: 2px 36px; background-position: 20px 0; }
.end { background-image: repeating-linear-gradient(#909090 0 2px, transparent 2px 4px); background-size: 2px 18px; background-position: 20px 0; }
.h::before { content: ""; position: absolute; left: 20px; right: 0; top: 18px; height: 2px; background: repeating-linear-gradient(90deg, #909090 0 2px, transparent 2px 4px); }
.tog { position: relative; width: 18px; height: 18px; border: 2px solid #909090; background: #f4f4f4; font: 700 18px/13px "Open Sans", sans-serif; display: flex; align-items: center; justify-content: center; }

/* price chart */
.chart { position: relative; flex: 1; display: grid; grid-template: 1fr 40px / 1fr 89px; padding: 5px 0 0 3px; background: #000; border-right: 5px solid #e8e8e8; color: #fff; font-size: 18px; line-height: 24px; }
.plot { position: relative; border: 2px solid #fff; }
.candles { position: absolute; inset: 0; width: 100%; height: 100%; }
.ohlc { position: absolute; left: 6px; top: 2px; display: flex; align-items: center; gap: 9px; }
.prices { display: flex; flex-direction: column; margin-top: -3px; margin-bottom: -26px; }
.prices li { flex: 1; display: flex; align-items: center; gap: 5px; }
.prices li::before { content: ""; width: 5px; height: 2px; background: #fff; }
.bid { position: absolute; right: 5px; top: 26%; width: 82px; padding-left: 7px; line-height: 23px; background: #fff; color: #000; }
.times { display: flex; grid-column: 1 / 3; }
.times li { width: 128px; line-height: 34px; background: linear-gradient(#fff, #fff) 2px 0 / 2px 7px no-repeat; white-space: nowrap; }

/* terminal */
.terminal { display: flex; padding: 9px 8px 8px 0; border-top: 2px solid #fff; }
.tside { width: 24px; padding-top: 3px; display: flex; flex-direction: column; border-right: 2px solid #a0a0a0; }
.tclose { height: 24px; display: flex; align-items: center; margin-bottom: 2px; }
.tname { flex: 1; width: 20px; display: flex; align-items: center; writing-mode: vertical-rl; transform: rotate(180deg); font-size: 21px; line-height: 20px; padding-top: 3px; background: linear-gradient(#b4c4d8, #d8e4f1); }
.tbody { flex: 1; display: flex; flex-direction: column; border-top: 3px solid #a0a0a0; }
.orders { min-height: 175px; background: #fff; border-right: 2px solid #e0e0e0; }
.otable { width: 100%; table-layout: fixed; border-spacing: 0; }
.o1 { width: 287px; } .o2 { width: 398px; } .o3 { width: 198px; } .o4 { width: 154px; } .o5 { width: 198px; } .o6 { width: 220px; }
.otable th { height: 35px; padding: 0 11px; line-height: 28px; font-weight: 400; text-align: right; border: solid #dcdcdc; border-width: 0 2px 2px 0; }
.otable th:first-child { padding-left: 13px; text-align: left; }
.otable th:last-child { border-right: 0; }
.otable .swap { padding-right: 17px; }
.sort { margin-left: 16px; }
.otable td { height: 41px; padding: 0 6px 2px 13px; font-size: 23px; font-weight: 700; background: #c8c8c8; text-align: right; }
.otable td:first-child { text-align: left; }
.dot { margin-right: 13px; vertical-align: -4px; }
.ttabs { padding-left: 4px; height: 43px; }
.tab sub { position: relative; top: 8px; margin-left: 2px; font-size: 16px; line-height: 0; font-weight: 600; color: #e03c3c; vertical-align: baseline; }

.status { display: flex; height: 45px; border-top: 2px solid #a0a0a0; box-shadow: inset 0 2px #fff; }
.st { padding: 0 10px; margin-top: 8px; line-height: 33px; white-space: nowrap; border-left: 2px solid #a8a8a8; }
.st-help { flex: 1; padding: 0; border: 0; }
.st-prof { width: 232px; } .st-time { width: 203px; } .st-o { width: 142px; } .st-l { width: 138px; } .st-v { width: 132px; }
.st-net { width: 260px; display: flex; align-items: center; gap: 8px; }
```
FILE: chart.js
```js
// One row per 5-minute bar: high, body top, body bottom, low, bearish (1) or bullish (0).
const bars = [
[1257,1267,1275,1305,1],[1263,1271,1277,1299,1],[1243,1275,1279,1305,0],[1213,1231,1281,1317,0],[1221,1231,1239,1247,1],
[1185,1185,1237,1237,0],[1139,1153,1191,1201,0],[1095,1129,1157,1161,0],[1067,1095,1131,1133,0],[1069,1097,1103,1117,1],
[1071,1081,1101,1111,0],[1077,1077,1161,1161,1],[1127,1161,1253,1263,1],[1193,1199,1255,1261,0],[1163,1197,1285,1291,1],
[1245,1265,1283,1321,0],[1239,1265,1275,1305,1],[1273,1273,1333,1337,1],[1307,1331,1365,1379,1],[1297,1325,1367,1395,0],
[1187,1191,1327,1337,0],[1145,1165,1191,1209,0],[1159,1169,1181,1201,1],[1109,1119,1181,1181,0],[1061,1107,1117,1143,0],
[1043,1105,1109,1119,0],[1095,1103,1133,1161,1],[1021,1045,1133,1149,0],[1017,1039,1043,1077,0],[973,999,1041,1059,0],
[979,981,1005,1051,0],[923,933,985,985,0],[889,927,935,957,0],[871,889,931,935,0],[833,841,891,911,0],
[823,835,871,881,1],[805,829,873,917,0],[753,757,827,833,0],[703,755,775,775,1],[739,757,777,789,0],
[727,737,759,779,0],[689,697,735,745,0],[695,695,703,751,0],[679,695,777,779,1],[739,777,801,803,1],
[785,797,819,841,1],[777,805,815,839,0],[747,749,807,817,0],[699,749,753,755,0],[731,747,781,791,1],
[723,727,777,787,0],[717,729,745,769,1],[731,745,747,779,0],[739,745,787,807,1],[711,727,783,797,0],
[517,619,729,729,0],[559,609,615,631,0],[607,611,637,681,1],[601,615,633,679,0],[593,613,619,625,1],
[555,559,621,635,0],[503,517,565,573,0],[511,517,563,577,1],[553,565,581,589,1],[555,575,595,611,1],
[575,593,607,665,1],[593,611,707,731,1],[677,687,705,777,0],[611,637,689,693,0],[609,639,691,703,1],
[625,649,689,723,0],[645,649,671,697,1],[611,645,671,681,0],[589,589,647,665,0],[585,595,621,659,1],
[619,625,639,665,1],[621,635,657,673,1],[629,637,657,697,0],[581,595,639,667,0],[555,587,599,607,0],
[555,583,587,637,0],[559,585,589,603,0],[543,567,587,609,0],[545,569,579,591,1],[541,551,577,619,0],
[501,507,557,581,0],[463,477,509,509,0],[397,467,473,487,0],[441,467,527,551,1],[485,521,525,561,0],
[345,375,525,531,0],[349,375,399,425,1],[323,333,399,407,0],[319,333,347,379,1],[309,349,395,413,1],
[373,385,389,455,0],[307,351,371,389,0],[303,351,365,433,1],[279,281,353,353,0],[283,287,357,361,1],
[263,319,355,357,0],[291,309,321,347,0],[309,309,391,447,1],[329,357,391,411,0],[295,309,345,361,0],
[303,309,369,395,1],[345,369,385,463,1],[317,385,389,405,0],[367,381,465,553,1],[449,465,579,611,1],
[513,537,575,597,0]
];
const FIRST_X = 585, STEP = 16, GREEN = '#64e63c';
let out = '<path d="M585 538H2836" stroke="#778899" stroke-width="2"/><path d="M2373 203h20l-10 11z" fill="#778899"/>';
bars.forEach(([high, top, bottom, low, bear], i) => {
  const x = FIRST_X + i * STEP;
  const h = bottom - top;
  out += `<path d="M${x} ${high}V${top}M${x} ${bottom}V${low}" stroke="${GREEN}" stroke-width="2"/>`;
  if (h <= 4) {
    out += `<rect x="${x - 5}" y="${top}" width="10" height="${h}" fill="${GREEN}"/>`;
  } else {
    out += `<rect x="${x - 4}" y="${top + 1}" width="8" height="${h - 2}" fill="${bear ? '#fff' : '#000'}" stroke="${GREEN}" stroke-width="2"/>`;
  }
});
document.getElementById('candleChart').innerHTML = out;
```
